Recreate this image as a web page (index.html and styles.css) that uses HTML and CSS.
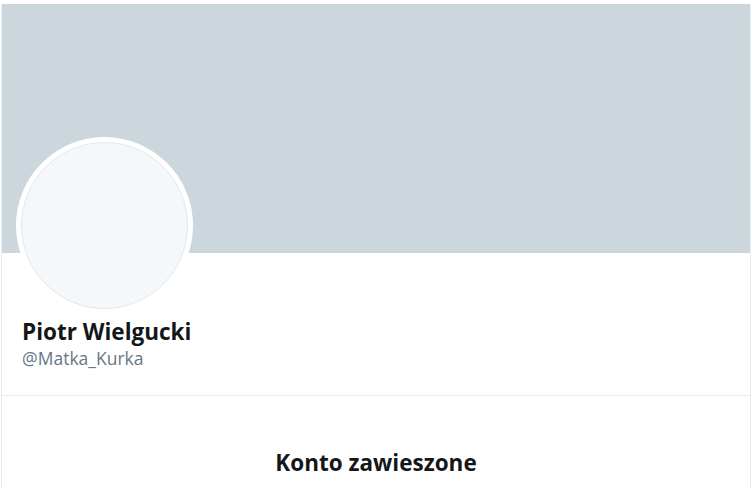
FILE: index.html
```html
<!DOCTYPE html>
<html lang="pl">
<head>
  <meta charset="UTF-8" />
  <meta name="viewport" content="width=device-width, initial-scale=1.0"/>
  <title>Piotr Wielgucki (@Matka_Kurka)</title>
  <link rel="stylesheet" href="styles.css">
</head>
<body>
  <div class="profile">
    <div class="banner"></div>

    <div class="header">
      <div class="avatar">
        <div class="avatar-inner"></div>
      </div>
      <div class="name">Piotr Wielgucki</div>
      <div class="handle">@Matka_Kurka</div>
    </div>

    <div class="suspended">
      <h2>Konto zawieszone</h2>
    </div>
  </div>
</body>
</html>
```

FILE: styles.css
```css
html, body {
  margin: 0;
  padding: 0;
  background: #fff;
}

body {
  font-family: "Open Sans", "Noto Sans", sans-serif;
  color: #14171a;
  padding-top: 4px;
  height: 488px;
  overflow: hidden;
  box-sizing: border-box;
}

.profile {
  margin-left: 1px;
  width: 748px;
  min-height: 484px;
  border-left: 1px solid #e6ecf0;
  border-right: 1px solid #e6ecf0;
}

.banner {
  height: 249px;
  background-color: #ccd6dd;
}

.header {
  display: flex;
  flex-direction: column;
  align-items: flex-start;
  padding: 0 14px 0 20px;
  height: 143px;
  box-sizing: border-box;
  border-bottom: 1px solid #e6ecf0;
}

.avatar {
  width: 177px;
  height: 177px;
  margin-top: -116px;
  margin-left: -6px;
  border-radius: 50%;
  background: #fff;
  display: flex;
  align-items: center;
  justify-content: center;
  flex-shrink: 0;
}

.avatar-inner {
  width: 165px;
  height: 165px;
  border-radius: 50%;
  background: #f5f8fa;
  border: 1px solid #e1e8ed;
}

.name {
  margin-top: 3px;
  font-size: 22.5px;
  font-weight: 700;
  line-height: 30px;
}

.handle {
  font-size: 17.5px;
  line-height: 22px;
  color: #657786;
}

.suspended {
  text-align: center;
  padding-top: 52px;
}

.suspended h2 {
  margin: 0;
  font-size: 22.5px;
  font-weight: 700;
  line-height: 30px;
}
```
